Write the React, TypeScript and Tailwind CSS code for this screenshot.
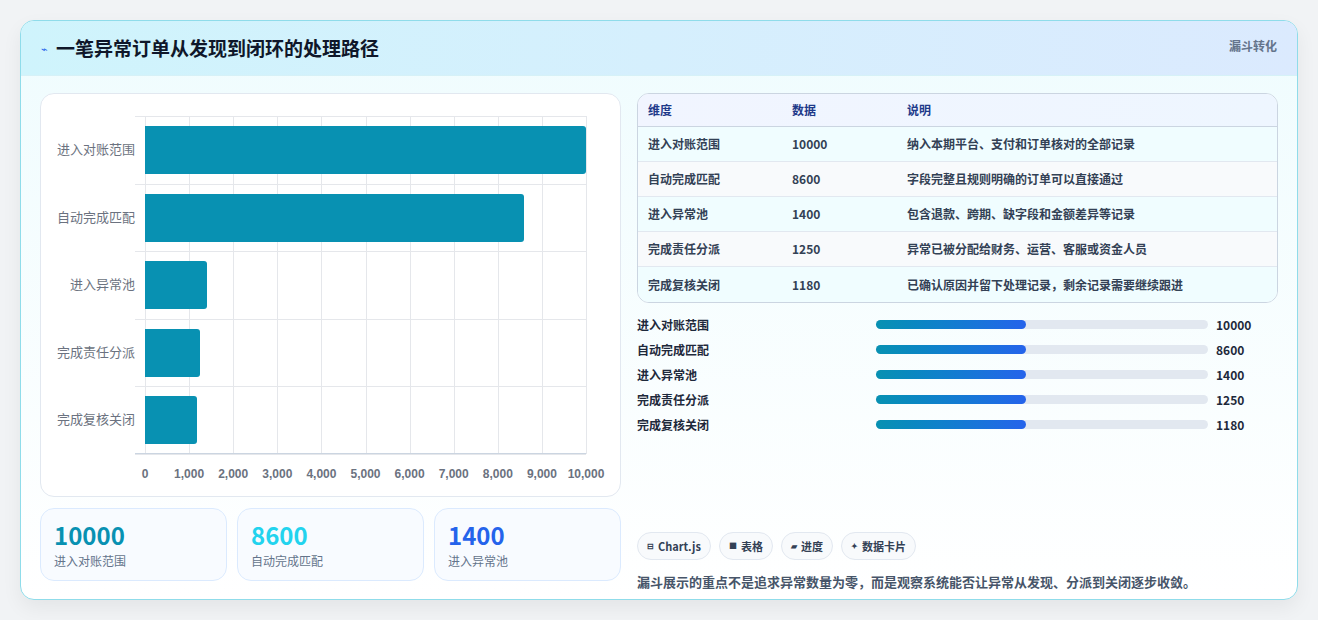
import React from "react";

const rows = [
  { n: "进入对账范围", v: 10000, d: "纳入本期平台、支付和订单核对的全部记录" },
  { n: "自动完成匹配", v: 8600, d: "字段完整且规则明确的订单可以直接通过" },
  { n: "进入异常池", v: 1400, d: "包含退款、跨期、缺字段和金额差异等记录" },
  { n: "完成责任分派", v: 1250, d: "异常已被分配给财务、运营、客服或资金人员" },
  { n: "完成复核关闭", v: 1180, d: "已确认原因并留下处理记录，剩余记录需要继续跟进" },
];
const ticks = ["0", "1,000", "2,000", "3,000", "4,000", "5,000", "6,000", "7,000", "8,000", "9,000", "10,000"];

export default function App() {
  return (
    <div className="w-[1318px] h-[620px] bg-[#f1f3f5] pt-[20px] pl-[20px]" style={{ fontFamily: '"Noto Sans CJK SC", "Noto Sans", sans-serif' }}>
      <div className="w-[1278px] h-[580px] rounded-[14px] border border-[#8fdcea] bg-gradient-to-b from-[#effcfe] to-white overflow-hidden shadow-[0_8px_20px_rgba(0,0,0,0.06)]">
        <div className="h-[55px] flex items-center justify-between px-[20px] bg-gradient-to-r from-[#cff4fc] to-[#dbeafe] border-b border-[#d6f1f7]">
          <div className="flex items-center gap-[8px]">
            <span className="text-[#2563eb] text-[11px]">⌁</span>
            <span className="text-[19px] font-bold text-[#0f172a]">一笔异常订单从发现到闭环的处理路径</span>
          </div>
          <span className="text-[12px] font-bold text-[#64748b] self-start mt-[16px]">漏斗转化</span>
        </div>
        <div className="flex gap-[16px] px-[19px] pt-[17px]">
          <div className="w-[581px] flex flex-col gap-[11px]">
            <div className="h-[404px] bg-white rounded-[14px] border border-[#e2e8f0] relative">
              <div className="absolute left-[104px] top-[22px] w-[441px] h-[338px]">
                {Array.from({ length: 11 }).map((_, i) => (
                  <div key={i} className="absolute top-0 bottom-0 w-px bg-[#e5e7eb]" style={{ left: i * 44.1 }} />
                ))}
                {Array.from({ length: 6 }).map((_, i) => (
                  <div key={i} className="absolute left-[-10px] right-0 h-px bg-[#e5e7eb]" style={{ top: i * 67.6 }} />
                ))}
                <div className="absolute left-[-10px] right-0 bottom-0 h-px bg-[#cbd5e1]" />
                {rows.map((r, i) => (
                  <div key={r.n}>
                    <div className="absolute h-[48px] bg-[#0891b2] rounded-r-[3px]" style={{ top: i * 67.6 + 10, left: 0, width: (r.v / 10000) * 441 }} />
                    <div className="absolute right-[451px] text-[13px] text-[#6b7280] whitespace-nowrap" style={{ top: i * 67.6 + 23 }}>{r.n}</div>
                  </div>
                ))}
                {ticks.map((t, i) => (
                  <div key={t} className="absolute top-[349px] -translate-x-1/2 text-[12px] font-bold text-[#6b7280]" style={{ left: i * 44.1, fontFamily: '"Liberation Sans", sans-serif' }}>{t}</div>
                ))}
              </div>
            </div>
            <div className="flex gap-[10px]">
              {[["10000", "text-[#0891b2]", "进入对账范围"], ["8600", "text-[#22d3ee]", "自动完成匹配"], ["1400", "text-[#2563eb]", "进入异常池"]].map(([v, c, l]) => (
                <div key={v} className="flex-1 h-[73px] rounded-[14px] border border-[#dbeafe] bg-[#f8fbff] px-[13px] pt-[11px]">
                  <div className={`text-[24px] font-bold leading-[30px] ${c}`}>{v}</div>
                  <div className="text-[12px] text-[#64748b] mt-[2px]">{l}</div>
                </div>
              ))}
            </div>
          </div>
          <div className="flex-1 flex flex-col">
            <div className="rounded-[12px] border border-[#cbd5e1] overflow-hidden bg-white">
              <div className="h-[33px] flex items-center text-[12px] font-bold text-[#1e3a8a] bg-gradient-to-r from-[#f1f5ff] to-[#eef6ff] border-b border-[#cbd5e1]">
                <div className="w-[154px] pl-[10px]">维度</div><div className="w-[115px]">数据</div><div>说明</div>
              </div>
              {rows.map((r, i) => (
                <div key={r.n} className={`h-[35px] flex items-center text-[12px] font-semibold text-[#334155] ${i < 4 ? "border-b border-[#e2e8f0]" : ""} ${i % 2 ? "bg-[#f8fafc]" : "bg-[#f0fdff]"}`}>
                  <div className="w-[154px] pl-[10px]">{r.n}</div><div className="w-[115px]">{r.v}</div><div>{r.d}</div>
                </div>
              ))}
            </div>
            <div className="mt-[12px] flex flex-col gap-[6px]">
              {rows.map((r) => (
                <div key={r.n} className="h-[19px] flex items-center text-[12px] font-bold text-[#1e293b]">
                  <div className="w-[239px]">{r.n}</div>
                  <div className="w-[332px] h-[9px] rounded-full bg-[#e2e8f0]">
                    <div className="w-[150px] h-[9px] rounded-full bg-gradient-to-r from-[#0891b2] to-[#2563eb]" />
                  </div>
                  <div className="ml-[8px]">{r.v}</div>
                </div>
              ))}
            </div>
            <div className="mt-[98px] flex gap-[8px]">
              {[["⊟", "Chart.js"], ["■", "表格"], ["▰", "进度"], ["✦", "数据卡片"]].map(([ic, t]) => (
                <div key={t} className="h-[28px] px-[9px] rounded-full border border-[#e2e8f0] bg-[#f8fafc] flex items-center gap-[4px] text-[11px] font-bold text-[#334155]">
                  <span className="text-[8px]">{ic}</span>{t}
                </div>
              ))}
            </div>
            <div className="mt-[12px] text-[13px] font-semibold text-[#475569]">漏斗展示的重点不是追求异常数量为零，而是观察系统能否让异常从发现、分派到关闭逐步收敛。</div>
          </div>
        </div>
      </div>
    </div>
  );
}
